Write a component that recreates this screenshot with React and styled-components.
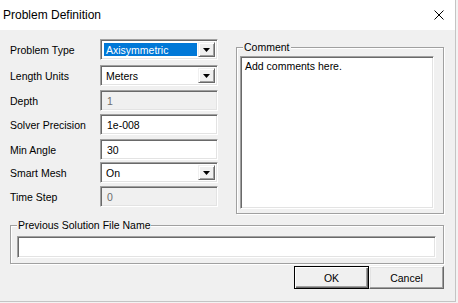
import styled, { createGlobalStyle, css } from 'styled-components';

const Global = createGlobalStyle`
  html, body {
    margin: 0;
    padding: 0;
    background: #f3f3f3;
  }
  body {
    font-family: "Liberation Sans", Arial, sans-serif;
    font-size: 10.5px;
    color: #000;
  }
`;

// classic win32 sunken edge
const sunken = css`
  box-sizing: border-box;
  border: 1px solid;
  border-color: #a0a0a0 #fff #fff #a0a0a0;
  box-shadow: inset 1px 1px 0 #696969, inset -1px -1px 0 #e3e3e3;
`;

const etched = css`
  box-sizing: border-box;
  border: 1px solid #a0a0a0;
  box-shadow: inset 1px 1px 0 #fff, 1px 1px 0 #fff;
`;

const fields = [
  { label: 'Problem Type', kind: 'combo', value: 'Axisymmetric', selected: true, top: 0 },
  { label: 'Length Units', kind: 'combo', value: 'Meters', top: 5 },
  { label: 'Depth', kind: 'edit', value: '1', disabled: true, top: 4 },
  { label: 'Solver Precision', kind: 'edit', value: '1e-008', top: 3 },
  { label: 'Min Angle', kind: 'edit', value: '30', top: 4 },
  { label: 'Smart Mesh', kind: 'combo', value: 'On', top: 2 },
  { label: 'Time Step', kind: 'edit', value: '0', disabled: true, top: 3 },
];

const Combo = ({ value, selected }) => (
  <ComboBox>
    <ComboValue $selected={selected}>{value}</ComboValue>
    <DropButton>
      <svg width="7" height="4" viewBox="0 0 7 4">
        <path d="M0 0h7L3.5 4z" fill="#000" />
      </svg>
    </DropButton>
  </ComboBox>
);

export default function App() {
  return (
    <Window>
      <Global />
      <TitleBar>
        <Title>Problem Definition</Title>
        <CloseIcon width="10" height="10" viewBox="0 0 10 10">
          <path d="M0.5 0.5L9.5 9.5M9.5 0.5L0.5 9.5" stroke="#000" strokeWidth="1" />
        </CloseIcon>
      </TitleBar>
      <Body>
        <TopArea>
          <Form>
            {fields.map((f) => (
              <Row key={f.label} $top={f.top}>
                <Label>{f.label}</Label>
                {f.kind === 'combo' ? (
                  <Combo value={f.value} selected={f.selected} />
                ) : (
                  <Edit $disabled={f.disabled}>{f.value}</Edit>
                )}
              </Row>
            ))}
          </Form>
          <CommentGroup>
            <Caption>Comment</Caption>
            <TextArea>Add comments here.</TextArea>
          </CommentGroup>
        </TopArea>
        <PrevGroup>
          <Caption>Previous Solution File Name</Caption>
          <FileEdit />
        </PrevGroup>
        <Buttons>
          <Button $default>OK</Button>
          <Button>Cancel</Button>
        </Buttons>
      </Body>
    </Window>
  );
}

const Window = styled.div`
  width: 456px;
  height: 302px;
  background: #f0f0f0;
  box-sizing: border-box;
  border-right: 1px solid #c4c4c4;
  border-bottom: 1px solid #c4c4c4;
`;

const TitleBar = styled.div`
  height: 30px;
  background: #fff;
  display: flex;
  align-items: center;
  justify-content: space-between;
  padding: 0 11px 0 3px;
`;

const Title = styled.span`
  font-size: 12px;
  margin-top: -1px;
`;

const CloseIcon = styled.svg`
  display: block;
`;

const Body = styled.div`
  padding: 9px 11px 0 10px;
`;

const TopArea = styled.div`
  display: flex;
  justify-content: space-between;
  align-items: flex-start;
`;

const Form = styled.div`
  display: flex;
  flex-direction: column;
  width: 208px;
`;

const Row = styled.div`
  display: grid;
  grid-template-columns: 90px 118px;
  align-items: center;
  height: 21px;
  margin-top: ${(p) => p.$top}px;
`;

const Label = styled.span`
  white-space: nowrap;
`;

const Edit = styled.div`
  ${sunken};
  height: 21px;
  padding: 0 0 0 6px;
  display: flex;
  align-items: center;
  background: ${(p) => (p.$disabled ? '#f0f0f0' : '#fff')};
  color: ${(p) => (p.$disabled ? '#6d6d6d' : '#000')};
`;

const ComboBox = styled.div`
  ${sunken};
  height: 21px;
  background: #fff;
  display: flex;
  align-items: stretch;
  padding: 2px;
`;

const ComboValue = styled.span`
  flex: 1;
  display: flex;
  align-items: center;
  padding-left: 2px;
  margin: 1px;
  background: ${(p) => (p.$selected ? '#0078d7' : 'transparent')};
  color: ${(p) => (p.$selected ? '#fff' : '#000')};
`;

const DropButton = styled.span`
  box-sizing: border-box;
  width: 17px;
  display: flex;
  align-items: center;
  justify-content: center;
  background: #f0f0f0;
  border: 1px solid;
  border-color: #f0f0f0 #696969 #696969 #f0f0f0;
  box-shadow: inset 1px 1px 0 #fff, inset -1px -1px 0 #a0a0a0;
  padding-top: 1px;
`;

const Group = styled.div`
  ${etched};
  position: relative;
`;

const Caption = styled.span`
  position: absolute;
  top: -7px;
  left: 6px;
  padding: 0 1px;
  background: #f0f0f0;
  line-height: 13px;
  white-space: nowrap;
`;

const CommentGroup = styled(Group)`
  width: 208px;
  height: 167px;
  margin-top: 8px;
  padding: 8px 0 0 3px;
`;

const TextArea = styled.div`
  ${sunken};
  width: 194px;
  height: 153px;
  background: #fff;
  padding: 3px 4px;
  line-height: 13px;
`;

const PrevGroup = styled(Group)`
  height: 39px;
  margin-top: 11px;
  padding: 10px 0 0 6px;
`;

const FileEdit = styled.div`
  ${sunken};
  width: 419px;
  height: 22px;
  background: #fff;
`;

const Buttons = styled.div`
  display: flex;
  justify-content: flex-end;
  margin-top: 2px;
`;

const Button = styled.button`
  box-sizing: border-box;
  width: 75px;
  height: 23px;
  font: inherit;
  color: #000;
  background: #f0f0f0;
  padding: 0;
  border: 1px solid;
  border-color: ${(p) => (p.$default ? '#000' : '#fff #696969 #696969 #fff')};
  box-shadow: ${(p) =>
    p.$default
      ? 'inset 1px 1px 0 #fff, inset -1px -1px 0 #696969, inset -2px -2px 0 #a0a0a0'
      : 'inset -1px -1px 0 #a0a0a0, inset 1px 1px 0 #e3e3e3'};
`;
